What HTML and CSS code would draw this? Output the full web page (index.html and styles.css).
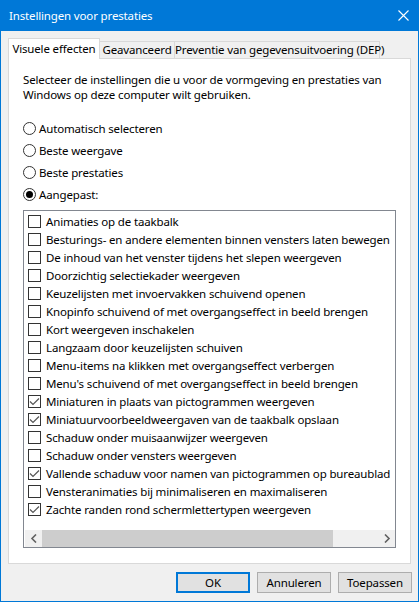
FILE: index.html
```html
<!DOCTYPE html>
<html lang="nl">
<head>
<meta charset="utf-8">
<title>Instellingen voor prestaties</title>
<link rel="stylesheet" href="styles.css">
</head>
<body>
<div class="window">
  <div class="titlebar">
    <span class="title">Instellingen voor prestaties</span>
    <svg class="close" width="11" height="11" viewBox="0 0 11 11"><path d="M0.5 0.5 L10.5 10.5 M10.5 0.5 L0.5 10.5" stroke="#fff" stroke-width="1.1" fill="none"/></svg>
  </div>
  <div class="content">
    <div class="tabs">
      <div class="tab active tab-1">Visuele effecten</div>
      <div class="tab tab-2">Geavanceerd</div>
      <div class="tab tab-3">Preventie van gegevensuitvoering (DEP)</div>
    </div>
    <div class="panel">
      <p class="intro">Selecteer de instellingen die u voor de vormgeving en prestaties van<br>Windows op deze computer wilt gebruiken.</p>
      <div class="radios">
        <div class="radio"><span class="rb"></span>Automatisch selecteren</div>
        <div class="radio"><span class="rb"></span>Beste weergave</div>
        <div class="radio"><span class="rb"></span>Beste prestaties</div>
        <div class="radio"><span class="rb on"></span>Aangepast:</div>
      </div>
      <div class="listbox">
        <div class="items">
          <div class="item"><span class="cb"></span>Animaties op de taakbalk</div>
          <div class="item"><span class="cb"></span>Besturings- en andere elementen binnen vensters laten bewegen</div>
          <div class="item"><span class="cb"></span>De inhoud van het venster tijdens het slepen weergeven</div>
          <div class="item"><span class="cb"></span>Doorzichtig selectiekader weergeven</div>
          <div class="item"><span class="cb"></span>Keuzelijsten met invoervakken schuivend openen</div>
          <div class="item"><span class="cb"></span>Knopinfo schuivend of met overgangseffect in beeld brengen</div>
          <div class="item"><span class="cb"></span>Kort weergeven inschakelen</div>
          <div class="item"><span class="cb"></span>Langzaam door keuzelijsten schuiven</div>
          <div class="item"><span class="cb"></span>Menu-items na klikken met overgangseffect verbergen</div>
          <div class="item"><span class="cb"></span>Menu's schuivend of met overgangseffect in beeld brengen</div>
          <div class="item"><span class="cb"><svg width="11" height="11" viewBox="0 0 11 11"><path d="M1 5.5 L4 8.5 L10 2.5" stroke="#555" stroke-width="1.2" fill="none"/></svg></span>Miniaturen in plaats van pictogrammen weergeven</div>
          <div class="item"><span class="cb"><svg width="11" height="11" viewBox="0 0 11 11"><path d="M1 5.5 L4 8.5 L10 2.5" stroke="#555" stroke-width="1.2" fill="none"/></svg></span>Miniatuurvoorbeeldweergaven van de taakbalk opslaan</div>
          <div class="item"><span class="cb"></span>Schaduw onder muisaanwijzer weergeven</div>
          <div class="item"><span class="cb"></span>Schaduw onder vensters weergeven</div>
          <div class="item"><span class="cb"><svg width="11" height="11" viewBox="0 0 11 11"><path d="M1 5.5 L4 8.5 L10 2.5" stroke="#555" stroke-width="1.2" fill="none"/></svg></span>Vallende schaduw voor namen van pictogrammen op bureaublad</div>
          <div class="item"><span class="cb"></span>Vensteranimaties bij minimaliseren en maximaliseren</div>
          <div class="item"><span class="cb"><svg width="11" height="11" viewBox="0 0 11 11"><path d="M1 5.5 L4 8.5 L10 2.5" stroke="#555" stroke-width="1.2" fill="none"/></svg></span>Zachte randen rond schermlettertypen weergeven</div>
        </div>
        <div class="hscroll">
          <div class="arrow"><svg width="8" height="9" viewBox="0 0 8 9"><path d="M6 0.5 L2 4.5 L6 8.5" stroke="#606060" stroke-width="1.6" fill="none"/></svg></div>
          <div class="track"><div class="thumb"></div></div>
          <div class="arrow"><svg width="8" height="9" viewBox="0 0 8 9"><path d="M2 0.5 L6 4.5 L2 8.5" stroke="#606060" stroke-width="1.6" fill="none"/></svg></div>
        </div>
      </div>
    </div>
    <div class="buttons">
      <div class="btn default">OK</div>
      <div class="btn">Annuleren</div>
      <div class="btn">Toepassen</div>
    </div>
  </div>
</div>
</body>
</html>
```

FILE: styles.css
```css
html, body {
  margin: 0;
  padding: 0;
}
body {
  width: 419px;
  height: 602px;
  font-family: "Noto Sans", "Open Sans", sans-serif;
  font-size: 11.5px;
  letter-spacing: -0.15px;
  color: #000;
  background: #f0f0f0;
}
.window {
  box-sizing: border-box;
  width: 419px;
  height: 602px;
  border: 1px solid #0078d7;
  background: #f0f0f0;
  display: flex;
  flex-direction: column;
}
.titlebar {
  height: 30px;
  flex: none;
  background: #0078d7;
  color: #fff;
  display: flex;
  align-items: center;
  justify-content: space-between;
  padding: 0 9px 0 8px;
}
.title {
  line-height: 30px;
}
.close {
  display: block;
  margin-top: -1px;
}
.content {
  flex: 1;
  display: flex;
  flex-direction: column;
  padding: 7px 7px 0 7px;
}
.tabs {
  display: flex;
  align-items: flex-end;
  height: 20px;
  position: relative;
  z-index: 1;
}
.tab {
  box-sizing: border-box;
  height: 17px;
  border: 1px solid #d9d9d9;
  border-bottom: none;
  background: #f0f0f0;
  line-height: 16px;
  white-space: nowrap;
  text-align: center;
  margin-left: -1px;
}
.tab.active {
  height: 21px;
  margin-bottom: -1px;
  background: #fff;
  line-height: 19px;
  margin-left: 0;
}
.tab-1 { width: 92px; }
.tab-2 { width: 76px; }
.tab-3 { width: 206px; }
.panel {
  box-sizing: border-box;
  height: 506px;
  flex: none;
  background: #fff;
  border: 1px solid #d9d9d9;
  padding: 0 0 0 14px;
}
.intro {
  margin: 13px 0 0 0;
  line-height: 15px;
  white-space: nowrap;
}
.radios {
  margin-top: 15px;
  height: 89px;
}
.radio {
  height: 22.25px;
  display: flex;
  align-items: center;
  white-space: nowrap;
}
.rb {
  box-sizing: border-box;
  width: 13px;
  height: 13px;
  border: 1px solid #333;
  border-radius: 50%;
  margin-right: 3px;
  display: flex;
  align-items: center;
  justify-content: center;
  flex: none;
}
.rb.on::after {
  content: "";
  width: 7px;
  height: 7px;
  border-radius: 50%;
  background: #000;
}
.listbox {
  box-sizing: border-box;
  margin-top: 4px;
  width: 373px;
  height: 338px;
  border: 1px solid #828790;
  background: #fff;
  display: flex;
  flex-direction: column;
}
.items {
  flex: 1;
  padding-top: 1px;
  overflow: hidden;
}
.item {
  height: 18px;
  display: flex;
  align-items: center;
  padding-left: 4px;
  white-space: nowrap;
}
.cb {
  box-sizing: border-box;
  width: 13px;
  height: 13px;
  border: 1px solid #333;
  margin-right: 5px;
  flex: none;
  display: flex;
  align-items: center;
  justify-content: center;
}
.cb svg {
  display: block;
}
.hscroll {
  height: 17px;
  margin-left: 1px;
  display: flex;
  background: #f0f0f0;
  flex: none;
}
.arrow {
  width: 17px;
  height: 17px;
  display: flex;
  align-items: center;
  justify-content: center;
  flex: none;
}
.arrow svg {
  display: block;
}
.track {
  flex: 1;
  display: flex;
}
.thumb {
  width: 291px;
  height: 17px;
  background: #cdcdcd;
}
.buttons {
  display: flex;
  justify-content: flex-end;
  gap: 7px;
  margin-top: 8px;
  margin-right: -1px;
}
.btn {
  box-sizing: border-box;
  width: 74px;
  height: 21px;
  border: 1px solid #adadad;
  background: #e1e1e1;
  display: flex;
  align-items: center;
  justify-content: center;
  white-space: nowrap;
}
.btn.default {
  border: 2px solid #0078d7;
}
```
